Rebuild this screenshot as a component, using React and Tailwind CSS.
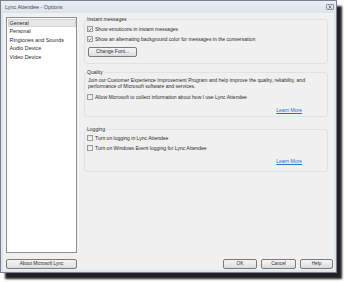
import React from 'react';

const font = { fontFamily: '"Liberation Sans", Arial, sans-serif' };

const CheckBox = ({ checked }) => (
    <span className="w-[6px] h-[6px] shrink-0 border border-[#9a9b9c] bg-gradient-to-br from-[#dedede] to-white flex items-center justify-center">
        {checked && (
            <svg width="5" height="5" viewBox="0 0 5 5">
                <path d="M0.6 2.6 L1.9 3.9 L4.4 0.9" fill="none" stroke="#4a5d96" strokeWidth="1" />
            </svg>
        )}
    </span>
);

const CheckRow = ({ checked, label }) => (
    <div className="h-[10px] flex items-center gap-[2px]">
        <CheckBox checked={checked} />
        <span className="text-[5.05px] leading-[6px] text-[#2a2a2a] whitespace-nowrap">{label}</span>
    </div>
);

const Button = ({ children, className = '' }) => (
    <div className={`h-[10px] border border-[#7a7a7a] rounded-[2px] bg-gradient-to-b from-[#f4f4f4] via-[#ebebeb] to-[#dadada] flex items-center justify-center text-[4.7px] text-[#2a2a2a] whitespace-nowrap ${className}`}>
        {children}
    </div>
);

const Group = ({ title, className = '', children }) => (
    <fieldset className={`min-w-0 border border-[#dde2e7] rounded-[3px] pl-[2px] ${className}`}>
        <legend className="text-[5.05px] leading-[6px] text-[#2a2a2a] pr-[1px]">{title}</legend>
        {children}
    </fieldset>
);

const LearnMore = () => (
    <div className="h-[8px] flex items-center justify-end pr-[25px]">
        <span className="text-[5.05px] leading-[6px] text-[#2a6fc9] underline">Learn More</span>
    </div>
);

const items = ['General', 'Personal', 'Ringtones and Sounds', 'Audio Device', 'Video Device'];

export default function App() {
    return (
        <div className="w-[348px] h-[282px] bg-white" style={font}>
            <div className="w-[337px] h-[273px] border border-[#79828c] bg-[#dee5ec] flex flex-col shadow-[5px_6px_2px_rgba(10,10,10,0.9)]">
                {/* title bar */}
                <div className="h-[12px] flex items-center justify-between pl-[4px] pr-[2px] bg-gradient-to-b from-[#e9eef3] to-[#dce3eb]">
                    <span className="text-[5.4px] text-[#444a52] whitespace-nowrap">Lync Attendee - Options</span>
                    <div className="w-[8px] h-[6px] mb-[1px] border border-[#8c949e] rounded-[1px] bg-gradient-to-b from-[#f2f4f7] to-[#d6dce3] flex items-center justify-center">
                        <svg width="4" height="4" viewBox="0 0 4 4">
                            <path d="M0.5 0.5 L3.5 3.5 M3.5 0.5 L0.5 3.5" stroke="#6a7079" strokeWidth="0.9" />
                        </svg>
                    </div>
                </div>

                {/* client area */}
                <div className="mx-[2px] mb-[2px] flex-1 bg-[#f0f0f0] flex flex-col pt-[3px] pl-[3px] pr-[1px] pb-[1px]">
                    <div className="flex gap-[7px]">
                        <div className="w-[71px] h-[236px] mt-[1px] border border-[#8c9096] bg-white pt-[0.5px]">
                            {items.map((item, i) => (
                                <div
                                    key={item}
                                    className={`h-[8.5px] flex items-center pl-[1px] text-[5.4px] text-[#2a2a2a] whitespace-nowrap mx-[0.5px] border ${i === 0 ? 'bg-[#e6e6e6] border-[#d4d4d4]' : 'border-transparent'}`}
                                >
                                    {item}
                                </div>
                            ))}
                        </div>

                        <div className="w-[244px] flex flex-col">
                            <Group title="Instant messages">
                                <div className="pt-[2px] pb-[6px]">
                                    <CheckRow checked label="Show emoticons in instant messages" />
                                    <CheckRow checked label="Show an alternating background color for messages in the conversation" />
                                    <Button className="w-[49px] h-[9px] mt-[3px] ml-[1px] text-[5px]">Change Font...</Button>
                                </div>
                            </Group>

                            <Group title="Quality" className="mt-[5px]">
                                <div className="pt-[2px] pb-[2px]">
                                    <p className="text-[5.05px] leading-[6px] text-[#2a2a2a] pl-[1px]">
                                        Join our Customer Experience Improvement Program and help improve the quality, reliability, and<br />
                                        performance of Microsoft software and services.
                                    </p>
                                    <div className="mt-[3px]">
                                        <CheckRow label="Allow Microsoft to collect information about how I use Lync Attendee" />
                                    </div>
                                    <div className="mt-[4px]">
                                        <LearnMore />
                                    </div>
                                </div>
                            </Group>

                            <Group title="Logging" className="mt-[9px]">
                                <div className="pt-[1px] pb-[6px]">
                                    <CheckRow label="Turn on logging in Lync Attendee" />
                                    <CheckRow label="Turn on Windows Event logging for Lync Attendee" />
                                    <div className="mt-[4px]">
                                        <LearnMore />
                                    </div>
                                </div>
                            </Group>
                        </div>
                    </div>

                    <div className="mt-[6px] flex items-center">
                        <Button className="w-[71px]">About Microsoft Lync</Button>
                        <div className="flex-1" />
                        <Button className="w-[34px]">OK</Button>
                        <Button className="w-[35px] ml-[4px]">Cancel</Button>
                        <Button className="w-[33px] ml-[4px]">Help</Button>
                    </div>
                </div>
            </div>
        </div>
    );
}
